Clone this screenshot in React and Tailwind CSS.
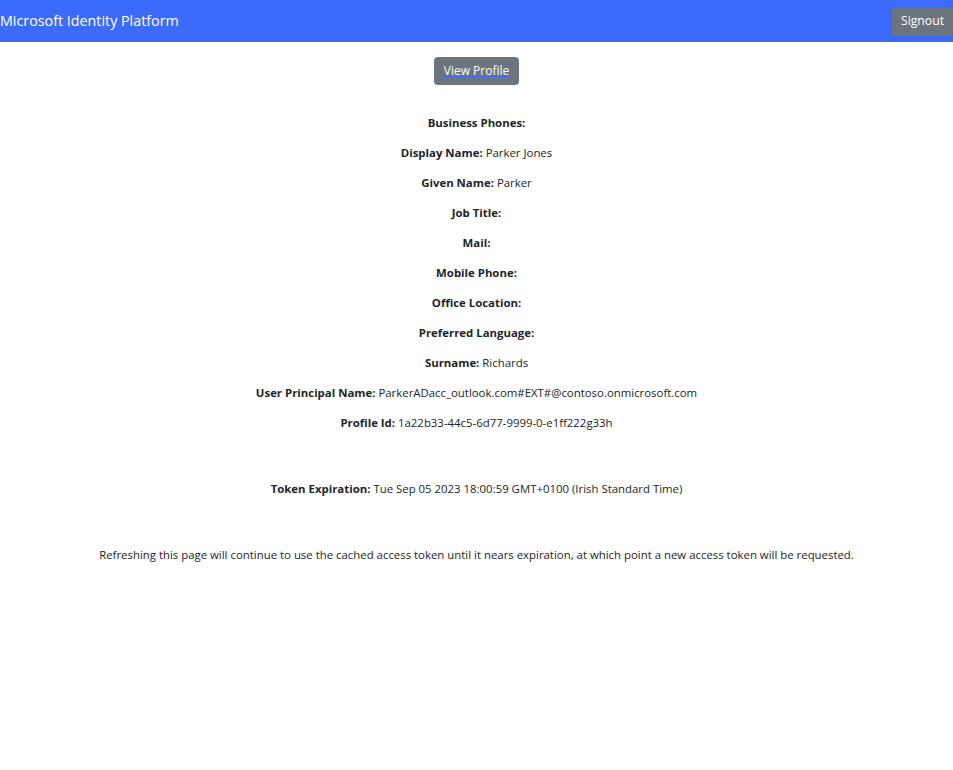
import React from "react";

const fields = [
  ["Business Phones:", ""],
  ["Display Name:", "Parker Jones"],
  ["Given Name:", "Parker"],
  ["Job Title:", ""],
  ["Mail:", ""],
  ["Mobile Phone:", ""],
  ["Office Location:", ""],
  ["Preferred Language:", ""],
  ["Surname:", "Richards"],
  ["User Principal Name:", "ParkerADacc_outlook.com#EXT#@contoso.onmicrosoft.com"],
  ["Profile Id:", "1a22b33-44c5-6d77-9999-0-e1ff222g33h"],
];

export default function App() {
  return (
    <div className="min-h-[770px] bg-white text-[#212529] font-['Open_Sans',sans-serif]">
      {/* navbar */}
      <nav className="h-[42px] bg-[#3c6afb] flex items-center justify-between">
        <span className="text-white text-[14.3px] leading-none">Microsoft Identity Platform</span>
        <button className="h-[29px] px-[9px] mt-[1px] bg-[#6c757d] text-white text-[12.2px] rounded-[4px]">
          Signout
        </button>
      </nav>

      <div className="flex flex-col items-center text-center">
        <button className="mt-[15px] h-[28px] px-[10px] bg-[#6c757d] rounded-[4px] text-white text-[12px]">
          <span className="underline decoration-[#3c6afb]">View Profile</span>
        </button>

        <div className="mt-[29px] flex flex-col gap-[12px] text-[11.4px] leading-[18px]">
          {fields.map(([label, value]) => (
            <p key={label}>
              <strong className="font-bold">{label}</strong> {value}
            </p>
          ))}
        </div>

        <p className="mt-[48px] text-[11.4px] leading-[18px]">
          <strong className="font-bold">Token Expiration:</strong> Tue Sep 05 2023 18:00:59 GMT+0100 (Irish Standard Time)
        </p>

        <p className="mt-[48px] text-[11.4px] leading-[18px]">
          Refreshing this page will continue to use the cached access token until it nears expiration, at which point a new access token will be requested.
        </p>
      </div>
    </div>
  );
}
